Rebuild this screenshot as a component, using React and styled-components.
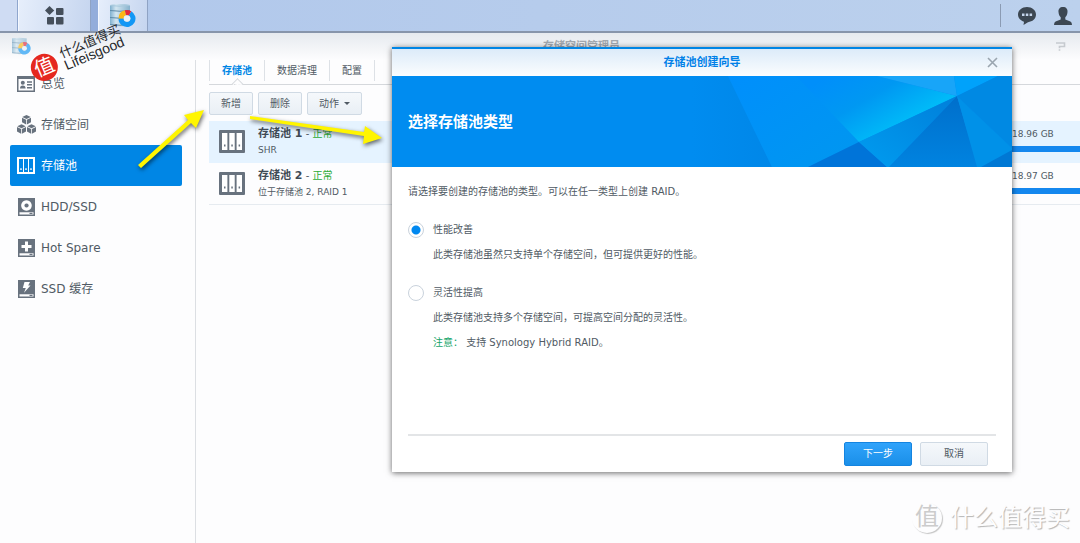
import { useState } from "react";
import styled, { createGlobalStyle, css } from "styled-components";

const GlobalStyle = createGlobalStyle`
    * {
        box-sizing: border-box;
    }

    body {
        margin: 0;
        background-color: #fdfdfe;
        color: #505a64;
        font-family: "DejaVu Sans", "Noto Sans CJK SC", sans-serif;
        font-size: 10px;
        line-height: 16px;
    }

    button, input {
        font: inherit;
    }

    h1, h2, p, ul {
        margin: 0;
        padding: 0;
    }
`

const menu = [
    { label: '总览', icon: 'overview' },
    { label: '存储空间', icon: 'volume' },
    { label: '存储池', icon: 'pool' },
    { label: 'HDD/SSD', icon: 'disk' },
    { label: 'Hot Spare', icon: 'spare' },
    { label: 'SSD 缓存', icon: 'cache' },
]

const tabs = ['存储池', '数据清理', '配置']

const pools = [
    { name: '存储池 1', status: '正常', detail: 'SHR', size: '18.96 GB' },
    { name: '存储池 2', status: '正常', detail: '位于存储池 2, RAID 1', size: '18.97 GB' },
]

function Cube({ x, y }){
    return(
        <g transform={`translate(${x} ${y})`}>
            <path d="M4.5 0 8.7 2 4.5 4 .3 2Z" />
            <path d="M0 2.8 4.1 4.8V9.4L0 7.3Z" />
            <path d="M9 2.8 4.9 4.8V9.4L9 7.3Z" />
        </g>
    )
}

function PoolIcon(){
    return(
        <svg width="26" height="23" viewBox="0 0 26 23" fill="currentColor" aria-hidden="true">
            <rect width="26" height="23" rx="1" />
            <path fill="#ffffff" d="M3 3H8.4V20H3ZM10.3 3H15.7V20H10.3ZM17.6 3H23V20H17.6Z" />
            <path d="M5 14.5H6.5V16.5H5ZM12.3 14.5H13.8V16.5H12.3ZM19.6 14.5H21.1V16.5H19.6Z" />
        </svg>
    )
}

function MenuIcon({ name }){
    if (name === 'pool') return(
        <svg width="18" height="17" viewBox="0 0 18 17" fill="currentColor" aria-hidden="true">
            <path fillRule="evenodd" d="M0 0H18V17H0ZM2 2V15H6V2ZM7 2V15H11V2ZM12 2V15H16V2Z" />
            <path d="M3.3 11.3H4.7V13H3.3ZM8.3 11.3H9.7V13H8.3ZM13.3 11.3H14.7V13H13.3Z" />
        </svg>
    )

    if (name === 'overview') return(
        <svg width="18" height="16" viewBox="0 0 18 16" fill="currentColor" aria-hidden="true">
            <path fillRule="evenodd" d="M0 0H18V16H0ZM1.5 3V14.5H16.5V3Z" />
            <circle cx="5.8" cy="6.8" r="2" />
            <path d="M3 12.5Q3 9.4 5.8 9.4T8.6 12.5ZM10 5.2H15V6.8H10ZM10 8H15V9.5H10ZM10 11H15V12.4H10Z" />
        </svg>
    )

    if (name === 'volume') return(
        <svg width="19" height="19" viewBox="0 0 19 19" fill="currentColor" aria-hidden="true">
            <Cube x={5} y={0} />
            <Cube x={0} y={9.3} />
            <Cube x={10} y={9.3} />
        </svg>
    )

    return(
        <svg width="17" height="18" viewBox="0 0 17 18" fill="currentColor" aria-hidden="true">
            <path fillRule="evenodd" d="M0 0H17V18H0ZM1.5 14.2V16.5H15.5V14.2Z" />
            <path d="M11.5 14.8H14.5V16H11.5Z" />
            {name === 'disk' && <path fill="#ffffff" fillRule="evenodd" d="M8.5 2.2A5.3 5.3 0 1 1 8.4 2.2ZM8.5 5.4A2.1 2.1 0 1 0 8.6 5.4Z" />}
            {name === 'spare' && <path fill="#ffffff" d="M7 2.5H10V6H13.5V9H10V12.5H7V9H3.5V6H7Z" />}
            {name === 'cache' && <path fill="#ffffff" d="M6.5 2H12L10.2 5.5H12.5L6 12.8 7.8 8H4.8Z" />}
        </svg>
    )
}

function StorageIcon({ size }){
    return(
        <svg width={size} height={size} viewBox="0 0 26 26" aria-hidden="true">
            <defs>
                <linearGradient id="drum" x1="0" y1="0" x2="1" y2="0">
                    <stop offset="0" stopColor="#7fb0cf" />
                    <stop offset=".3" stopColor="#d3e6f1" />
                    <stop offset="1" stopColor="#86b1cc" />
                </linearGradient>
            </defs>
            <path fill="url(#drum)" d="M0 2Q10 0 20 2V22Q10 25 0 22Z" />
            <path fill="none" stroke="#5f8ba9" strokeWidth="1" d="M0 7.5Q10 9 20 7.5M0 14.5Q10 16 20 14.5M0 21.5Q10 23 20 21.5" />
            <path fill="none" stroke="#a8c9dd" strokeWidth="1" d="M0 2.5Q10 4 20 2.5" />
            <g fill="none" strokeWidth="5.2">
                <circle cx="17" cy="15.5" r="5.9" stroke="#1297f5" pathLength="360" strokeDasharray="240 120" transform="rotate(-60 17 15.5)" />
                <circle cx="17" cy="15.5" r="5.9" stroke="#fbb615" pathLength="360" strokeDasharray="75 285" transform="rotate(180 17 15.5)" />
                <circle cx="17" cy="15.5" r="5.9" stroke="#e3293c" pathLength="360" strokeDasharray="45 315" transform="rotate(-105 17 15.5)" />
            </g>
            <circle cx="17" cy="15.5" r="3.3" fill="#e9f1f8" />
        </svg>
    )
}

function BannerArt(){
    return(
        <Art viewBox="0 0 320 91" preserveAspectRatio="xMaxYMid slice" aria-hidden="true">
            <defs>
                <linearGradient id="glow" gradientUnits="userSpaceOnUse" x1="170" y1="-20" x2="210" y2="48">
                    <stop offset="0" stopColor="#008ffa" />
                    <stop offset=".5" stopColor="#0098f2" />
                    <stop offset="1" stopColor="#00baf8" />
                </linearGradient>
                <linearGradient id="edge" x1="0" y1="0" x2="1" y2="0">
                    <stop offset="0" stopColor="#008cf0" />
                    <stop offset="1" stopColor="#0087e8" />
                </linearGradient>
                <linearGradient id="wide" x1="0" y1="0" x2="1" y2="1">
                    <stop offset="0" stopColor="#008ffc" />
                    <stop offset="1" stopColor="#0097ef" />
                </linearGradient>
                <linearGradient id="shade" x1="0" y1="0" x2="0" y2="1">
                    <stop offset="0" stopColor="#006fcb" />
                    <stop offset="1" stopColor="#0083e0" />
                </linearGradient>
                <linearGradient id="slope" x1="0" y1="1" x2="1" y2="0">
                    <stop offset="0" stopColor="#009cf0" />
                    <stop offset="1" stopColor="#007fda" />
                </linearGradient>
            </defs>
            <path fill="url(#edge)" d="M0 0H36L80 91H0Z" />
            <path fill="url(#wide)" d="M36 0H108L167 66 116 91H80Z" />
            <path fill="url(#glow)" d="M104 0H185L265 20 167 66Z" />
            <path fill="#18a5f8" d="M185 0H262L265 20Z" />
            <path fill="#00a2fb" d="M262 0H306L265 20Z" />
            <path fill="#0074d9" d="M167 66 116 91H195Z" />
            <path fill="url(#slope)" d="M265 20 167 66 195 91H197Z" />
            <path fill="url(#shade)" d="M265 20 197 91H286Z" />
            <path fill="#0091e8" d="M265 20 320 72V75L290 91H285Z" />
            <path fill="#0089e3" d="M265 20 306 0H320V72Z" />
            <path fill="#0078d4" d="M320 74V91H289Z" />
        </Art>
    )
}

export default function App(){
    const [tab, setTab] = useState(0);
    const [type, setType] = useState('performance');

    return(
        <Desktop>
            <GlobalStyle />
            <Taskbar>
                <Edge />
                <TaskButton $width={73} aria-label="主菜单">
                    <svg width="19" height="19" viewBox="0 0 19 19" fill="#454f5b" aria-hidden="true">
                        <path d="M4.5 0 9.2 4.5 4.5 9 0 4.5Z" />
                        <rect x="11" y="2" width="7.5" height="7" rx="1" />
                        <rect x="2" y="11" width="7" height="7.5" rx="1" />
                        <rect x="11" y="11" width="7.5" height="7.5" rx="1" />
                    </svg>
                </TaskButton>
                <Gap />
                <TaskButton $width={50} aria-label="存储空间管理员"><StorageIcon size={26} /></TaskButton>
                <Tray>
                    <TrayButton aria-label="通知">
                        <svg width="18" height="18" viewBox="0 0 18 18" aria-hidden="true">
                            <path fill="#3c4752" d="M9 0C14 0 18 3.3 18 7.6S14.5 14.8 10 15.2L5.5 18 6 14.7C2.5 13.8 0 11 0 7.6 0 3.3 4 0 9 0Z" />
                            <path fill="#c5d6ec" d="M4 6.5H6.5V9H4ZM7.8 6.5H10.3V9H7.8ZM11.6 6.5H14.1V9H11.6Z" />
                        </svg>
                    </TrayButton>
                    <TrayButton aria-label="用户">
                        <svg width="18" height="18" viewBox="0 0 18 18" aria-hidden="true">
                            <path fill="#3c4752" d="M9 0C12.2 0 13.8 2.1 13.5 5 13.3 7.4 12.5 9.2 11.3 10.3V12.6L16.4 14.6Q18 15.3 18 18H0Q0 15.3 1.6 14.6L6.7 12.6V10.3C5.5 9.2 4.7 7.4 4.5 5 4.2 2.1 5.8 0 9 0Z" />
                        </svg>
                    </TrayButton>
                </Tray>
            </Taskbar>

            <WindowHeader>
                <Faded><StorageIcon size={19} /></Faded>
                <WindowTitle>存储空间管理员</WindowTitle>
                <HelpButton aria-label="帮助">
                    <svg width="10" height="9" viewBox="0 0 10 9" fill="none" stroke="#c6cacf" strokeWidth="1.6" aria-hidden="true">
                        <path d="M0 1H8.5V4.5H3.5V6.2M3.5 7.2V8.8" />
                    </svg>
                </HelpButton>
            </WindowHeader>

            <Columns>
                <Sidebar>
                    {menu.map(item => (
                        <MenuItem key={item.icon} href={`#${item.icon}`} $active={item.icon === 'pool'}>
                            <IconBox><MenuIcon name={item.icon} /></IconBox>
                            {item.label}
                        </MenuItem>
                    ))}
                </Sidebar>
                <Main>
                    <Tabs role="tablist">
                        {tabs.map((label, i) => (
                            <Tab key={label} role="tab" aria-selected={tab === i} $active={tab === i} onClick={() => setTab(i)}>{label}</Tab>
                        ))}
                    </Tabs>
                    <Toolbar>
                        <Button>新增</Button>
                        <Button>删除</Button>
                        <Button>动作 <Caret /></Button>
                    </Toolbar>
                    {pools.map((pool, i) => (
                        <PoolRow key={pool.name} $selected={i === 0}>
                            <PoolIcon />
                            <PoolText>
                                <PoolName><strong>{pool.name}</strong> - <em>{pool.status}</em></PoolName>
                                <Small>{pool.detail}</Small>
                            </PoolText>
                            <Usage>
                                <Small>{pool.size}</Small>
                                <UsageBar />
                            </Usage>
                        </PoolRow>
                    ))}
                </Main>
            </Columns>

            <Dialog role="dialog" aria-labelledby="wizard-title">
                <DialogHeader>
                    <DialogTitle id="wizard-title">存储池创建向导</DialogTitle>
                    <CloseButton aria-label="关闭">
                        <svg width="11" height="11" viewBox="0 0 11 11" stroke="#9aa5af" strokeWidth="1.6" aria-hidden="true">
                            <path d="M1 1 10 10M10 1 1 10" />
                        </svg>
                    </CloseButton>
                </DialogHeader>
                <Banner>
                    <BannerArt />
                    <BannerTitle>选择存储池类型</BannerTitle>
                </Banner>
                <DialogBody>
                    <p>请选择要创建的存储池的类型。可以在任一类型上创建 RAID。</p>
                    <Option>
                        <OptionLabel>
                            <Radio name="type" checked={type === 'performance'} onChange={() => setType('performance')} />
                            性能改善
                        </OptionLabel>
                        <Hint>此类存储池虽然只支持单个存储空间，但可提供更好的性能。</Hint>
                    </Option>
                    <Option>
                        <OptionLabel>
                            <Radio name="type" checked={type === 'flexible'} onChange={() => setType('flexible')} />
                            灵活性提高
                        </OptionLabel>
                        <Hint>此类存储池支持多个存储空间，可提高空间分配的灵活性。</Hint>
                        <Hint><Note>注意：</Note> 支持 Synology Hybrid RAID。</Hint>
                    </Option>
                </DialogBody>
                <DialogFooter>
                    <Button $wide $primary>下一步</Button>
                    <Button $wide>取消</Button>
                </DialogFooter>
            </Dialog>

            <Arrows width="400" height="200" viewBox="0 0 400 200" fill="#fff500" aria-hidden="true">
                <path d="M138 165 188 120 184 115 204 110 196 128 191 123 141 168Z" />
                <path d="M250 116 364 132 365 126 382 138 363 144 364 136 250 119Z" />
            </Arrows>

            <Stamp>
                <Seal>值</Seal>
                <StampText>
                    <span>什么值得买</span>
                    <small>Lifeisgood</small>
                </StampText>
            </Stamp>

            <Watermark>
                <WatermarkSeal>值</WatermarkSeal>
                什么值得买
            </Watermark>
        </Desktop>
    )
}

const Desktop = styled.div`
    min-height: 100vh;
    display: flex;
    flex-direction: column;
    position: relative;
    overflow: hidden;
`

const Taskbar = styled.header`
    display: flex;
    height: 33px;
    background: linear-gradient(90deg, #b0c7eb, #bcd1ed);
    border-bottom: 2px solid #8795ab;
`

const Edge = styled.div`
    width: 18px;
    background-color: #cfdcf3;
    border-right: 1px solid #8fa6cd;
`

const Gap = styled.div`
    width: 7px;
    background-color: #93addb;
`

const TaskButton = styled.button`
    width: ${props=>props.$width}px;
    display: flex;
    justify-content: center;
    align-items: center;
    padding: 0;
    border: 0;
    border-right: 1px solid #8fa3c4;
    border-left: 1px solid #f4f8ff;
    background: linear-gradient(100deg, #e6eefb, #c5d5ef);
`

const Tray = styled.div`
    display: flex;
    align-items: center;
    gap: 18px;
    margin: 4px 0 4px auto;
    padding: 0 8px 0 17px;
    border-left: 1px solid #8b9bb3;
`

const TrayButton = styled.button`
    display: flex;
    padding: 0;
    border: 0;
    background: none;
`

const WindowHeader = styled.div`
    display: flex;
    align-items: center;
    justify-content: space-between;
    height: 27px;
    padding: 0 14px 0 12px;
    background: linear-gradient(#e6eaef, #fdfdfe);
`

const Faded = styled.span`
    display: flex;
    opacity: 0.65;
`

const WindowTitle = styled.h1`
    margin-left: 76px;
    color: #a2a8af;
    font-size: 11px;
    font-weight: bold;
`

const HelpButton = styled.button`
    display: flex;
    padding: 0;
    border: 0;
    background: none;
`

const Columns = styled.div`
    display: flex;
    flex: 1;
`

const Sidebar = styled.nav`
    width: 196px;
    flex-shrink: 0;
    padding: 3px 13px 0 10px;
    border-right: 1px solid #dcdfe3;
`

const MenuItem = styled.a`
    display: flex;
    align-items: center;
    gap: 5px;
    height: 41px;
    padding-left: 6px;
    border-radius: 2px;
    color: ${props=>props.$active ? '#ffffff' : '#505a64'};
    background-color: ${props=>props.$active ? '#0086e5' : 'transparent'};
    font-size: 12px;
    text-decoration: none;

    svg{
        color: ${props=>props.$active ? '#ffffff' : '#68727e'};
    }
`

const IconBox = styled.span`
    width: 20px;
    display: flex;
    justify-content: center;
`

const Main = styled.main`
    flex: 1;
    min-width: 0;
    padding-left: 13px;
`

const Tabs = styled.div`
    display: flex;
    height: 25px;
    border-bottom: 1px solid #d5d8dc;
`

const Tab = styled.button`
    position: relative;
    height: 21px;
    padding: 0 12px;
    border: 0;
    border-right: 1px solid #dde1e6;
    background: none;
    color: ${props=>props.$active ? '#0086e5' : '#505a64'};
    font-weight: ${props=>props.$active ? 'bold' : 'normal'};

    &:first-child{
        border-left: 1px solid #dde1e6;
    }

    ${props=>props.$active && css`
        &::after{
            content: "";
            position: absolute;
            left: 50%;
            bottom: -8px;
            width: 7px;
            height: 7px;
            margin-left: -4px;
            border: 1px solid #d5d8dc;
            border-right-color: transparent;
            border-bottom-color: transparent;
            background: linear-gradient(135deg, #fdfdfe 50%, transparent 50%);
            transform: rotate(45deg);
        }
    `}
`

const Toolbar = styled.div`
    display: flex;
    gap: 5px;
    padding: 7px 0 6px;
`

const Button = styled.button`
    height: ${props=>props.$wide ? 24 : 23}px;
    min-width: ${props=>props.$wide ? 68 : 44}px;
    padding: 0 11px;
    border: 1px solid ${props=>props.$primary ? '#1484e0' : '#d0dae4'};
    border-radius: 2px;
    background: ${props=>props.$primary ? 'linear-gradient(#30a3fb, #1a8fe8)' : 'linear-gradient(#f5f8fb, #e9eff5)'};
    color: ${props=>props.$primary ? '#ffffff' : '#505a64'};
`

const Caret = styled.span`
    display: inline-block;
    margin-left: 2px;
    vertical-align: middle;
    border: 3px solid transparent;
    border-top-color: #505a64;
    border-bottom-width: 0;
`

const PoolRow = styled.section`
    display: flex;
    align-items: center;
    height: 42px;
    padding-left: 10px;
    background-color: ${props=>props.$selected ? '#e5f3ff' : 'transparent'};
    border-bottom: 1px solid ${props=>props.$selected ? '#e5f3ff' : '#e6ebf0'};

    > svg{
        color: #68727e;
    }
`

const PoolText = styled.div`
    padding: 1px 0 0 13px;
`

const PoolName = styled.h2`
    font-size: 10px;
    font-weight: normal;

    strong{
        font-size: 11px;
        color: #3f4a55;
    }

    em{
        color: #2cab35;
        font-style: normal;
    }
`

const Small = styled.p`
    font-size: 9px;
`

const Usage = styled.div`
    align-self: flex-start;
    width: 68px;
    margin-left: auto;
    padding-top: 5px;
`

const UsageBar = styled.div`
    height: 6px;
    margin-top: 4px;
    background-color: #1487ee;
`

const Dialog = styled.section`
    position: absolute;
    top: 47px;
    left: 392px;
    right: 68px;
    border-top: 2px solid #0086e5;
    background-color: #ffffff;
    box-shadow: 0 1px 6px rgba(0, 0, 0, 0.6);
`

const DialogHeader = styled.div`
    display: grid;
    grid-template-columns: 1fr auto 1fr;
    align-items: center;
    height: 27px;
    padding: 0 14px;
    background: linear-gradient(#dcebf9, #fbfdfe);
`

const DialogTitle = styled.h2`
    grid-column: 2;
    color: #0080e8;
    font-size: 11px;
    font-weight: bold;
`

const CloseButton = styled.button`
    display: flex;
    justify-self: end;
    padding: 0;
    border: 0;
    background: none;
`

const Banner = styled.div`
    position: relative;
    display: flex;
    align-items: center;
    height: 91px;
    padding-left: 16px;
    background-color: #008cf0;
`

const Art = styled.svg`
    position: absolute;
    top: 0;
    right: 0;
    height: 100%;
`

const BannerTitle = styled.h2`
    color: #ffffff;
    font-size: 15px;
    font-weight: bold;
`

const DialogBody = styled.div`
    min-height: 267px;
    padding: 17px 16px 0;
`

const Option = styled.div`
    display: flex;
    flex-direction: column;
    gap: 9px;
    margin-top: 22px;
`

const OptionLabel = styled.label`
    display: flex;
    align-items: center;
    gap: 9px;
`

const Radio = styled.input.attrs({ type: 'radio' })`
    appearance: none;
    width: 16px;
    height: 16px;
    margin: 0;
    border: 1px solid #c9d2dc;
    border-radius: 50%;
    background-color: #ffffff;

    &:checked{
        background: radial-gradient(circle, #0088f0 4px, #ffffff 5px);
    }
`

const Hint = styled.p`
    padding-left: 25px;
`

const Note = styled.span`
    color: #17a56b;
`

const DialogFooter = styled.div`
    display: flex;
    justify-content: flex-end;
    gap: 8px;
    margin: 0 16px;
    padding: 6px 8px;
    border-top: 2px solid #e3e5e7;
`

const Arrows = styled.svg`
    position: absolute;
    top: 0;
    left: 0;
    pointer-events: none;
    filter: drop-shadow(1px 2px 2px rgba(0, 0, 0, 0.6));
`

const Stamp = styled.div`
    position: absolute;
    top: 40px;
    left: 28px;
    display: flex;
    align-items: center;
    gap: 6px;
    transform: rotate(-23deg);
    pointer-events: none;
`

const Seal = styled.span`
    width: 27px;
    height: 27px;
    border-radius: 50%;
    background-color: #e5281f;
    color: #ffffff;
    font-size: 20px;
    line-height: 26px;
    text-align: center;
`

const StampText = styled.span`
    display: flex;
    flex-direction: column;
    color: #26282b;
    font-size: 13px;
    line-height: 13px;

    small{
        font-family: "Liberation Sans", sans-serif;
        font-size: 14px;
    }
`

const Watermark = styled.div`
    position: absolute;
    right: 10px;
    bottom: 9px;
    display: flex;
    align-items: center;
    gap: 8px;
    color: #fdfdfe;
    font-size: 24px;
    line-height: 32px;
    text-shadow: 1px 1px 1px #b4b4b4;
    pointer-events: none;
`

const WatermarkSeal = styled.span`
    width: 30px;
    height: 30px;
    border-radius: 50%;
    box-shadow: 1px 1px 1px #c4c4c4;
    color: #cccccc;
    line-height: 28px;
    text-align: center;
    text-shadow: none;
`
